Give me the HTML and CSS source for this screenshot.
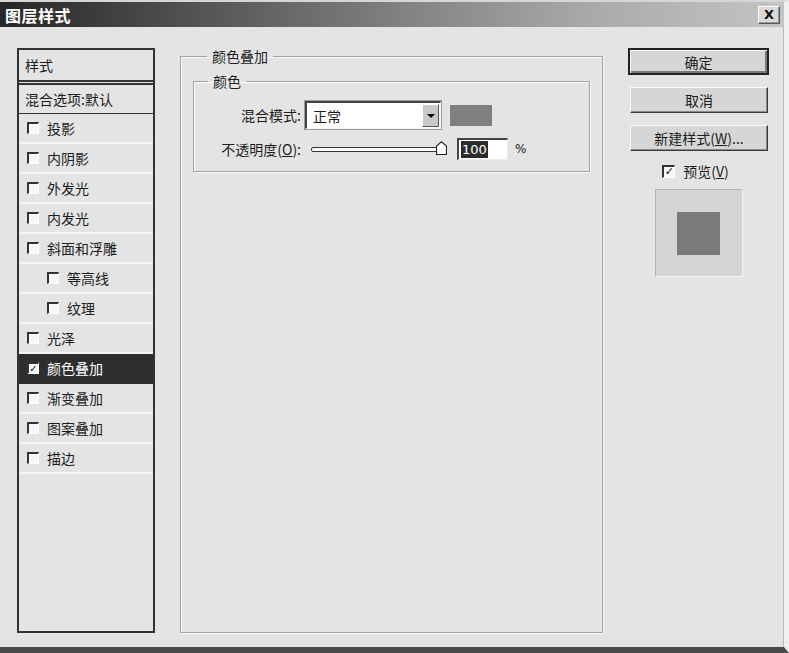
FILE: index.html
```html
<!DOCTYPE html>
<html lang="zh-CN">
  <head>
    <meta charset="utf-8">
    <title>图层样式</title>
    <link rel="stylesheet" href="styles.css">
  </head>
  <body>
    <div class="window">
      <header class="titlebar">
        <span class="title">图层样式</span>
        <button class="close-btn">X</button>
      </header>
      <div class="client">
        <div class="style-list">
          <div class="list-head">样式</div>
          <div class="list-blend">混合选项:默认</div>
          <div class="list-item"><span class="check"></span>投影</div>
          <div class="list-item"><span class="check"></span>内阴影</div>
          <div class="list-item"><span class="check"></span>外发光</div>
          <div class="list-item"><span class="check"></span>内发光</div>
          <div class="list-item"><span class="check"></span>斜面和浮雕</div>
          <div class="list-item sub"><span class="check"></span>等高线</div>
          <div class="list-item sub"><span class="check"></span>纹理</div>
          <div class="list-item"><span class="check"></span>光泽</div>
          <div class="list-item selected"><span class="check on">✓</span>颜色叠加</div>
          <div class="list-item"><span class="check"></span>渐变叠加</div>
          <div class="list-item"><span class="check"></span>图案叠加</div>
          <div class="list-item"><span class="check"></span>描边</div>
        </div>

        <fieldset class="group outer">
          <legend>颜色叠加</legend>
          <fieldset class="group inner">
            <legend>颜色</legend>
            <div class="form-grid">
              <label class="field-label">混合模式:</label>
              <div class="field-row">
                <div class="select">
                  <span class="select-text">正常</span>
                  <span class="select-btn"><span class="arrow"></span></span>
                </div>
                <span class="swatch"></span>
              </div>
              <label class="field-label">不透明度(<u>O</u>):</label>
              <div class="field-row">
                <div class="slider">
                  <span class="track"></span>
                  <svg class="thumb" width="11" height="14" viewBox="0 0 11 14">
                    <path d="M0.5 13.5 L0.5 5 L5.5 0.8 L10.5 5 L10.5 13.5 Z" fill="#fff" stroke="#222" stroke-width="1.2"/>
                  </svg>
                </div>
                <div class="num-input"><span class="sel">100</span></div>
                <span class="unit">%</span>
              </div>
            </div>
          </fieldset>
        </fieldset>

        <div class="actions">
          <button class="btn default">确定</button>
          <button class="btn">取消</button>
          <button class="btn">新建样式(<u>W</u>)...</button>
          <label class="preview-check"><span class="check on">✓</span>预览(<u>V</u>)</label>
          <div class="preview">
            <span class="preview-fill"></span>
          </div>
        </div>
      </div>
    </div>
  </body>
</html>
```
FILE: styles.css
```css
html, body {
  margin: 0;
  padding: 0;
}
body {
  --bg: #e4e4e4;
  --dark: #2e2e2e;
  --text: #1c1c1c;
  width: 789px;
  height: 653px;
  overflow: hidden;
  background: var(--bg);
  color: var(--text);
  font-family: "Noto Sans CJK SC", "DejaVu Sans", sans-serif;
  font-size: 14px;
}

.window {
  height: 653px;
  border-top: 2px solid #d6d6d6;
  border-right: 5px solid #f0f0f0;
  border-bottom: 6px solid #4a4a4a;
  box-shadow: inset -1px 0 0 #b8b8b8;
  display: flex;
  flex-direction: column;
  box-sizing: border-box;
}

/* title bar */
.titlebar {
  height: 25px;
  flex-shrink: 0;
  display: flex;
  align-items: center;
  padding: 0 4px 0 5px;
  background: linear-gradient(to right, #262626 0%, #6e6e6e 40%, #a9a9a9 75%, #c4c4c4 100%);
}
.title {
  color: #fff;
  font-weight: bold;
  font-size: 16px;
  letter-spacing: 0.5px;
  flex-grow: 1;
}
.close-btn {
  width: 22px;
  height: 18px;
  padding: 0;
  margin-right: 0;
  font: bold 13px "DejaVu Sans", sans-serif;
  color: #111;
  background: #d8d8d8;
  border: 1px solid;
  border-color: #fff #555 #555 #fff;
  box-shadow: inset -1px -1px 0 #999;
}

/* client area */
.client {
  flex-grow: 1;
  display: grid;
  grid-template-columns: 138px 423px 141px;
  column-gap: 25px;
  padding: 21px 0 14px 17px;
  min-height: 0;
}

/* style list */
.style-list {
  border: 2px solid #333;
  background: var(--bg);
  display: flex;
  flex-direction: column;
}
.list-head {
  height: 30px;
  line-height: 30px;
  padding-left: 6px;
  border-bottom: 5px double #333;
}
.list-blend {
  height: 28px;
  line-height: 28px;
  padding-left: 6px;
  border-bottom: 1px solid #333;
}
.list-item {
  height: 28px;
  display: flex;
  align-items: center;
  padding-left: 8px;
  border-bottom: 2px solid #f3f3f3;
}
.list-item.sub {
  padding-left: 28px;
}
.list-item.selected {
  background: var(--dark);
  color: #fff;
  border-bottom-color: var(--dark);
}
.check {
  width: 9px;
  height: 9px;
  margin-right: 8px;
  flex-shrink: 0;
  background: #f7f7f7;
  border-top: 2px solid #333;
  border-left: 2px solid #333;
  border-right: 1px solid #fff;
  border-bottom: 1px solid #fff;
  font: bold 10px/9px "DejaVu Sans", sans-serif;
  color: #111;
  text-align: center;
}
.check.on {
  overflow: hidden;
}

/* group boxes */
.group {
  margin: 0;
  border: 1px solid #a2a2a2;
  box-shadow: inset 1px 1px 0 #fafafa, 1px 1px 0 #fafafa;
}
.group legend {
  padding: 0 5px;
  line-height: 16px;
}
.group.outer {
  padding: 9px 12px 0 12px;
  min-width: 0;
}
.group.outer > legend {
  margin-left: 14px;
}
.group.inner {
  padding: 12px 0 11px 0;
}
.group.inner > legend {
  margin-left: 14px;
}

.form-grid {
  display: grid;
  grid-template-columns: 107px auto;
  column-gap: 4px;
  row-gap: 9px;
  align-items: center;
}
.field-label {
  text-align: right;
}
.field-row {
  display: flex;
  align-items: center;
}

.select {
  width: 133px;
  height: 25px;
  display: flex;
  align-items: center;
  background: #fff;
  border-top: 2px solid #444;
  border-left: 2px solid #444;
  border-right: 1px solid #f8f8f8;
  border-bottom: 1px solid #f8f8f8;
  box-shadow: 0 0 0 1px #999;
}
.select-text {
  flex-grow: 1;
  padding-left: 6px;
}
.select-btn {
  width: 17px;
  height: 23px;
  margin-right: 1px;
  background: #c9c9c9;
  border: 1px solid;
  border-color: #fff #555 #555 #fff;
  box-sizing: border-box;
  display: flex;
  align-items: center;
  justify-content: center;
}
.arrow {
  border-left: 4px solid transparent;
  border-right: 4px solid transparent;
  border-top: 4px solid #000;
}
.swatch {
  width: 42px;
  height: 21px;
  margin-left: 9px;
  background: #7f7f7f;
}

.slider {
  width: 138px;
  height: 16px;
  margin-left: 6px;
  display: flex;
  align-items: center;
  position: relative;
}
.track {
  width: 134px;
  height: 3px;
  background: #fafafa;
  border: 1px solid #333;
  border-radius: 2px;
}
.thumb {
  position: absolute;
  right: 2px;
  top: 0;
}
.num-input {
  width: 46px;
  height: 19px;
  margin-left: 8px;
  background: #fff;
  border-top: 2px solid #444;
  border-left: 2px solid #444;
  border-right: 1px solid #eee;
  border-bottom: 1px solid #eee;
  display: flex;
  align-items: center;
  padding-left: 2px;
  box-sizing: content-box;
}
.sel {
  background: #2b2b2b;
  color: #fff;
  font: 13px/17px "DejaVu Sans", sans-serif;
  padding: 0 1px;
}
.unit {
  margin-left: 7px;
  font-family: "DejaVu Sans", sans-serif;
  font-size: 12px;
}

/* right column */
.actions {
  display: flex;
  flex-direction: column;
  align-items: stretch;
}
.btn {
  height: 26px;
  margin: 0 1px 12px 2px;
  padding: 0;
  font-family: "Noto Sans CJK SC", sans-serif;
  font-size: 14px;
  color: var(--text);
  background: #d6d6d6;
  border: 1px solid;
  border-color: #fafafa #3a3a3a #3a3a3a #fafafa;
  box-shadow: inset -1px -1px 0 #8a8a8a;
}
.btn.default {
  margin: 0 0 12px 0;
  height: 27px;
  border-width: 2px;
  border-color: #222;
  box-shadow: inset 1px 1px 0 #fafafa, inset -2px -2px 0 #7a7a7a;
}
.preview-check {
  display: flex;
  align-items: center;
  justify-content: center;
  margin: -2px 0 0 0;
  padding-right: 6px;
  height: 20px;
}
.preview-check .check {
  width: 10px;
  height: 10px;
  line-height: 10px;
  font-size: 11px;
}
.preview {
  width: 88px;
  height: 88px;
  margin: 8px auto 0 auto;
  background: #d4d4d4;
  border-top: 1px solid #b5b5b5;
  border-left: 1px solid #b5b5b5;
  border-right: 1px solid #f2f2f2;
  border-bottom: 1px solid #f2f2f2;
  display: flex;
  align-items: center;
  justify-content: center;
  box-sizing: border-box;
}
.preview-fill {
  width: 43px;
  height: 43px;
  background: #7a7a7a;
}
```
